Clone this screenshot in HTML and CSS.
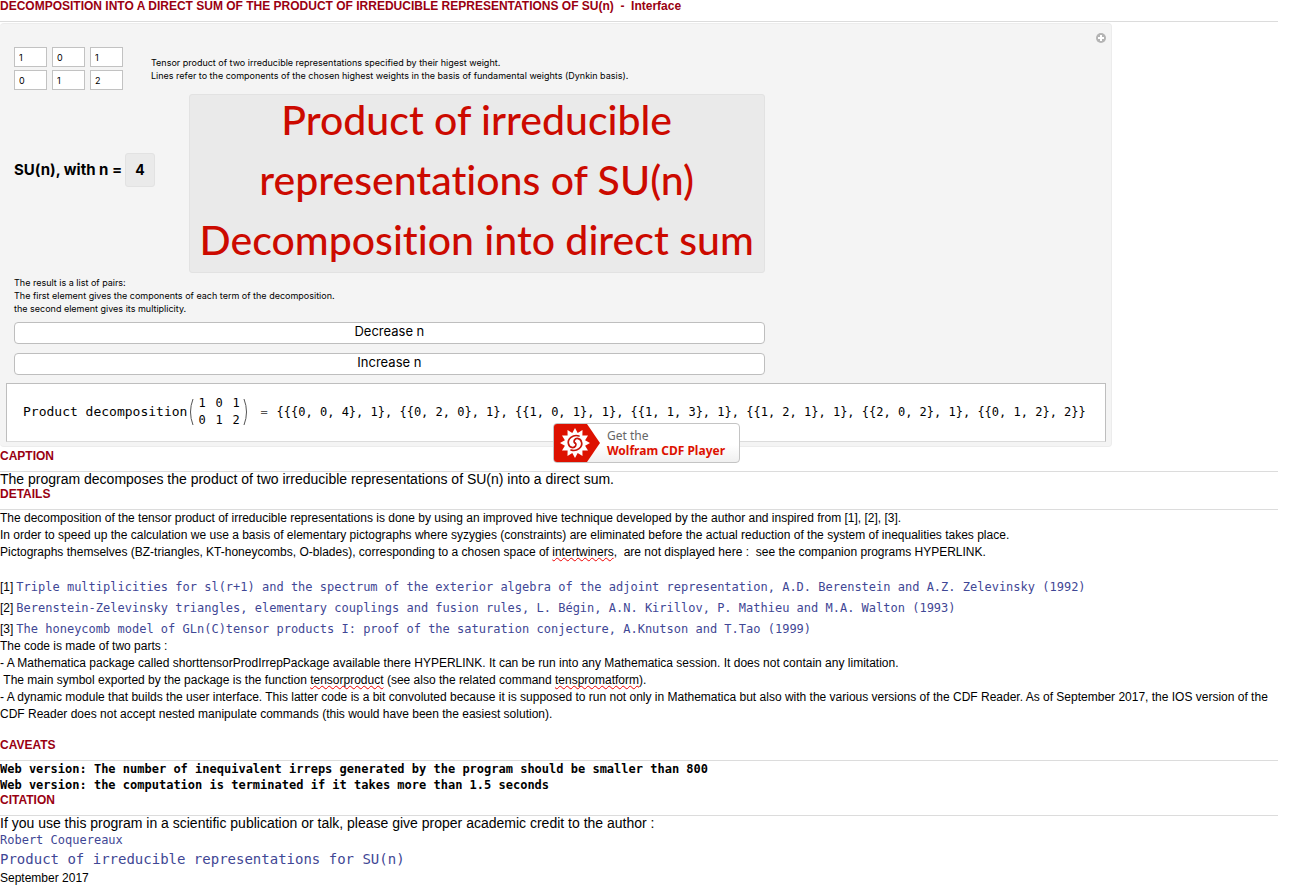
FILE: index.html
```html
<!DOCTYPE html>
<html lang="en">
<head>
<meta charset="utf-8">
<title>Product of irreducible representations of SU(n)</title>
<link rel="stylesheet" href="styles.css">
</head>
<body>
<main class="page">
  <h1 class="heading heading-first">DECOMPOSITION INTO A DIRECT SUM OF THE PRODUCT OF IRREDUCIBLE REPRESENTATIONS OF SU(n) &nbsp;- &nbsp;Interface</h1>

  <section class="panel">
    <button class="expand" type="button" aria-label="Show options">
      <svg width="10" height="10" viewBox="0 0 10 10"><circle cx="5" cy="5" r="5" fill="#b4b4b4"/><path d="M5 2v6M2 5h6" stroke="#fff" stroke-width="2"/></svg>
    </button>
    <div class="controls">
      <div class="weights-row">
        <div class="weights">
          <input type="text" value="1" aria-label="First weight, component 1">
          <input type="text" value="0" aria-label="First weight, component 2">
          <input type="text" value="1" aria-label="First weight, component 3">
          <input type="text" value="0" aria-label="Second weight, component 1">
          <input type="text" value="1" aria-label="Second weight, component 2">
          <input type="text" value="2" aria-label="Second weight, component 3">
        </div>
        <p class="note">Tensor product of two irreducible representations specified by their higest weight.<br>Lines refer to the components of the chosen highest weights in the basis of fundamental weights (Dynkin basis).</p>
      </div>
      <div class="group-row">
        <div class="group"><span>SU(n), with n =</span><output class="group-value">4</output></div>
        <div class="banner"><span>Product of irreducible</span><span>representations of SU(n)</span><span>Decomposition into direct sum</span></div>
      </div>
      <p class="note note-result">The result is a list of pairs:<br>The first element gives the components of each term of the decomposition.<br>the second element gives its multiplicity.</p>
      <div class="steps">
        <button class="step" type="button">Decrease n</button>
        <button class="step" type="button">Increase n</button>
      </div>
    </div>
    <div class="result">
      <span class="result-name">Product decomposition</span>
      <span class="matrix">
        <svg class="paren" width="5" height="28" viewBox="0 0 5 28"><path d="M4 1Q-1 14 4 27" fill="none" stroke="#555"/></svg>
        <span class="matrix-cells"><span>1</span><span>0</span><span>1</span><span>0</span><span>1</span><span>2</span></span>
        <svg class="paren" width="5" height="28" viewBox="0 0 5 28"><path d="M1 1Q6 14 1 27" fill="none" stroke="#555"/></svg>
      </span>
      <span class="equals">=</span>
      <span class="result-list">{{{0, 0, 4}, 1}, {{0, 2, 0}, 1}, {{1, 0, 1}, 1}, {{1, 1, 3}, 1}, {{1, 2, 1}, 1}, {{2, 0, 2}, 1}, {{0, 1, 2}, 2}}</span>
    </div>
    <a class="player" href="#player">
      <svg class="player-logo" width="46" height="38" viewBox="0 0 46 38">
        <path d="M3 0H33L46 19L33 38H3Q0 38 0 35V3Q0 0 3 0Z" fill="#dd1100"/>
        <g transform="translate(21 19)">
          <path d="M0-15L2.700-10.100 7.500-13 7.400-7.400 13-7.500 10.100-2.700 15 0 10.100 2.700 13 7.500 7.400 7.400 7.500 13 2.700 10.100 0 15-2.700 10.100-7.500 13-7.400 7.400-13 7.500-10.100 2.700-15 0-10.100-2.700-13-7.500-7.400-7.400-7.500-13-2.700-10.100Z" fill="#fff"/>
          <g fill="none" stroke="#c81408" stroke-width="1.700" stroke-linecap="round">
            <path d="M4-7C-2-9-8-4-6.500 1C-5.500 5-1 5.500.5 3C1.500 1 .5 0 0 0"/>
            <path d="M4-7C-2-9-8-4-6.500 1C-5.500 5-1 5.500.5 3C1.500 1 .5 0 0 0" transform="rotate(180)"/>
          </g>
        </g>
      </svg>
      <span class="player-text"><span>Get the</span><strong>Wolfram CDF Player</strong></span>
    </a>
  </section>

  <section>
    <h2 class="heading">CAPTION</h2>
    <p class="lead">The program decomposes the product of two irreducible representations of SU(n) into a direct sum.</p>
  </section>

  <section>
    <h2 class="heading">DETAILS</h2>
    <p class="text">The decomposition of the tensor product of irreducible representations is done by using an improved hive technique developed by the author and inspired from [1], [2], [3].<br>In order to speed up the calculation we use a basis of elementary pictographs where syzygies (constraints) are eliminated before the actual reduction of the system of inequalities takes place.<br>Pictographs themselves (BZ-triangles, KT-honeycombs, O-blades), corresponding to a chosen space of <span class="misspelt">intertwiners</span>, &nbsp;are not displayed here : &nbsp;see the companion programs HYPERLINK.</p>
    <ul class="refs">
      <li><span>[1]</span><a href="#ref1">Triple multiplicities for sl(r+1) and the spectrum of the exterior algebra of the adjoint representation, A.D. Berenstein and A.Z. Zelevinsky (1992)</a></li>
      <li><span>[2]</span><a href="#ref2">Berenstein-Zelevinsky triangles, elementary couplings and fusion rules, L. Bégin, A.N. Kirillov, P. Mathieu and M.A. Walton (1993)</a></li>
      <li><span>[3]</span><a href="#ref3">The honeycomb model of GLn(C)tensor products I: proof of the saturation conjecture, A.Knutson and T.Tao (1999)</a></li>
    </ul>
    <p class="text">The code is made of two parts :<br>- A Mathematica package called shorttensorProdIrrepPackage available there HYPERLINK. It can be run into any Mathematica session. It does not contain any limitation.<br>&nbsp;The main symbol exported by the package is the function <span class="misspelt">tensorproduct</span> (see also the related command <span class="misspelt">tenspromatform</span>).<br>- A dynamic module that builds the user interface. This latter code is a bit convoluted because it is supposed to run not only in Mathematica but also with the various versions of the CDF Reader. As of September 2017, the IOS version of the CDF Reader does not accept nested manipulate commands (this would have been the easiest solution).</p>
  </section>

  <section class="caveats">
    <h2 class="heading">CAVEATS</h2>
    <p class="warning">Web version: The number of inequivalent irreps generated by the program should be smaller than 800<br>Web version: the computation is terminated if it takes more than 1.5 seconds</p>
  </section>

  <section>
    <h2 class="heading">CITATION</h2>
    <p class="lead">If you use this program in a scientific publication or talk, please give proper academic credit to the author :</p>
    <a class="author" href="#author">Robert Coquereaux</a>
    <a class="work" href="#work">Product of irreducible representations for SU(n)</a>
    <p class="date">September 2017</p>
  </section>
</main>
</body>
</html>
```
FILE: styles.css
```css
* { box-sizing: border-box; }
body {
  margin: 0;
  background: #fff;
  color: #000;
  font-family: "Liberation Sans", Arial, sans-serif;
  font-size: 12px;
}
p, ul { margin: 0; padding: 0; }
ul { list-style: none; }
a { color: #3f4795; text-decoration: none; }
.page { padding-right: 15px; }

.heading {
  margin: 0;
  padding-bottom: 8px;
  border-bottom: 1px solid #dcdcdc;
  color: #990011;
  font-size: 12px;
  font-weight: bold;
  line-height: 14px;
}
.heading-first { padding-bottom: 9px; line-height: 12px; }

.panel {
  position: relative;
  width: 87%;
  margin: 1px 0 2px;
  padding: 23px 5px 4px 6px;
  border: 1px solid #ececec;
  border-left: 0;
  border-radius: 4px;
  background: #f4f4f4;
  font-family: Inter, sans-serif;
}
.expand {
  position: absolute;
  top: 9px;
  right: 5px;
  width: 10px;
  height: 10px;
  padding: 0;
  border: 0;
  background: none;
}
.expand svg { display: block; }
.controls { display: inline-block; padding: 0 0 0 8px; vertical-align: top; }
.weights-row { display: flex; align-items: center; gap: 28px; }
.weights { display: grid; grid-template-columns: repeat(3, 33px); gap: 3px 5px; }
.weights input {
  width: 33px;
  height: 20px;
  padding: 0 4px;
  border: 1px solid #c2c2c2;
  border-radius: 0;
  background: #fff;
  font-family: Inter, sans-serif;
  font-size: 9px;
}
.note { font-size: 9px; line-height: 13px; }
.group-row { display: flex; align-items: center; gap: 34px; margin-top: 4px; }
.group {
  display: flex;
  align-items: center;
  gap: 3px;
  padding-bottom: 28px;
  font-size: 15px;
  font-weight: bold;
  white-space: nowrap;
}
.group-value {
  padding: 7px 9px;
  border: 1px solid #e2e2e2;
  border-radius: 3px;
  background: #eaeaea;
  font-size: 14px;
  line-height: 18px;
}
.banner {
  display: flex;
  flex-direction: column;
  gap: 10px;
  padding: 0 10px 7px;
  border: 1px solid #e2e2e2;
  border-radius: 3px;
  background: #eaeaea;
  color: #cc0a00;
  font-family: Lato, sans-serif;
  font-size: 41px;
  font-weight: 500;
  font-variant-ligatures: none;
  line-height: 50px;
  text-align: center;
  white-space: nowrap;
}
.note-result { margin-top: 3px; }
.steps { display: grid; gap: 9px; margin-top: 7px; }
.step {
  height: 22px;
  padding: 0 0 3px;
  border: 1px solid #bebebe;
  border-radius: 4px;
  background: #fff;
  font-family: Inter, sans-serif;
  font-size: 13px;
  line-height: 17px;
}
.result {
  display: flex;
  align-items: center;
  height: 59px;
  margin-top: 8px;
  padding: 0 0 2px 16px;
  border: 1px solid #bebebe;
  border-bottom-color: #dcdcdc;
  background: #fff;
  font-family: "DejaVu Sans Mono", monospace;
  font-size: 12px;
  white-space: nowrap;
}
.result-name { font-size: 13px; }
.matrix { display: flex; align-items: center; gap: 2px; margin-left: 2px; }
.matrix-cells { display: grid; grid-template-columns: repeat(3, 7px); gap: 0 10px; padding: 0 2px; line-height: 17px; }
.equals { margin: 0 9px 0 12px; color: #555; }
.player {
  position: absolute;
  top: 399px;
  left: 553px;
  display: flex;
  gap: 7px;
  width: 187px;
  height: 40px;
  border: 1px solid #c4c4c4;
  border-radius: 4px;
  background: linear-gradient(#fff 55%, #f0f0f0);
  font-family: "Noto Sans", sans-serif;
}
.player-text { display: flex; flex-direction: column; padding-top: 4px; color: #666; font-size: 12px; line-height: 15px; white-space: nowrap; }
.player-text strong { color: #dd1100; }

.lead { font-size: 14px; line-height: 15px; }
.text { line-height: 17px; }
.misspelt { text-decoration: underline wavy #e00 1px; text-underline-offset: 1px; text-decoration-skip-ink: none; }
.refs { display: grid; gap: 4px; margin-top: 18px; }
.refs li { display: flex; gap: 3px; line-height: 17px; }
.refs a, .author, .work { font-family: "DejaVu Sans Mono", monospace; }
.caveats { padding-top: 15px; }
.warning { font-family: "DejaVu Sans Mono", monospace; font-weight: bold; line-height: 16px; }
.author, .work { display: block; }
.author { font-size: 12px; line-height: 18px; }
.work { font-size: 14px; line-height: 20px; }
.date { line-height: 18px; }
```
